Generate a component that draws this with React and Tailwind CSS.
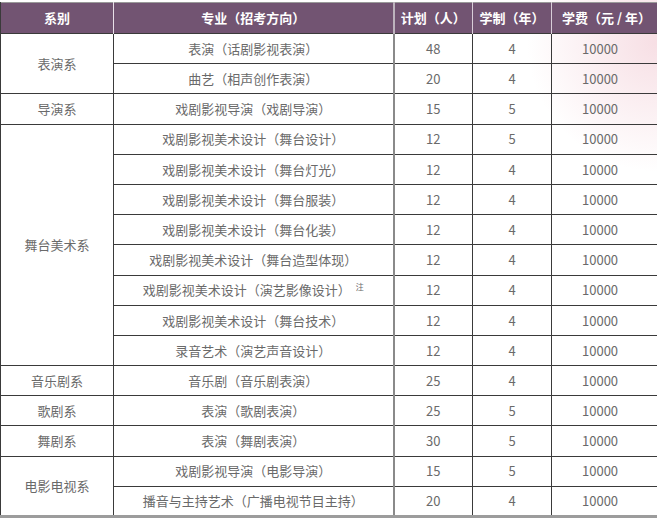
const rows = [
  { dept: "表演系", span: 2, major: "表演（话剧影视表演）", plan: 48, years: 4 },
  { major: "曲艺（相声创作表演）", plan: 20, years: 4 },
  { dept: "导演系", span: 1, major: "戏剧影视导演（戏剧导演）", plan: 15, years: 5 },
  { dept: "舞台美术系", span: 8, major: "戏剧影视美术设计（舞台设计）", plan: 12, years: 5 },
  { major: "戏剧影视美术设计（舞台灯光）", plan: 12, years: 4 },
  { major: "戏剧影视美术设计（舞台服装）", plan: 12, years: 4 },
  { major: "戏剧影视美术设计（舞台化装）", plan: 12, years: 4 },
  { major: "戏剧影视美术设计（舞台造型体现）", plan: 12, years: 4 },
  { major: "戏剧影视美术设计（演艺影像设计）", note: true, plan: 12, years: 4 },
  { major: "戏剧影视美术设计（舞台技术）", plan: 12, years: 4 },
  { major: "录音艺术（演艺声音设计）", plan: 12, years: 4 },
  { dept: "音乐剧系", span: 1, major: "音乐剧（音乐剧表演）", plan: 25, years: 4 },
  { dept: "歌剧系", span: 1, major: "表演（歌剧表演）", plan: 25, years: 5 },
  { dept: "舞剧系", span: 1, major: "表演（舞剧表演）", plan: 30, years: 5 },
  { dept: "电影电视系", span: 2, major: "戏剧影视导演（电影导演）", plan: 15, years: 5 },
  { major: "播音与主持艺术（广播电视节目主持）", plan: 20, years: 4 },
];

const cell = "border border-[#3a3a3a] text-center align-middle p-0";

export default function App() {
  return (
    <div
      className="w-[657px] h-[520px] overflow-hidden bg-white pt-[2px] bg-[radial-gradient(circle_at_100%_8%,rgba(240,196,206,0.55),rgba(255,255,255,0)_130px)]"
      style={{ fontFamily: '"Noto Sans CJK SC", "Noto Sans", sans-serif' }}
    >
      <table className="table-fixed border-collapse w-[660px] text-[13px] text-[#6a6a6a] border-t border-t-[#9a9a9a] border-b-[3px] border-b-[#9c9c9c]">
        <colgroup>
          <col className="w-[113px]" />
          <col className="w-[280px]" />
          <col className="w-[79px]" />
          <col className="w-[79px]" />
          <col className="w-[109px]" />
        </colgroup>
        <thead>
          <tr className="h-[31px] bg-[#725472] text-white font-bold text-[13px]">
            <th className="border-r border-r-[#e8e0e8] border-l border-l-[#3a3a3a] p-0">系别</th>
            <th className="border-r-2 border-r-[#bdb3bd] p-0">专业（招考方向）</th>
            <th className="border-r border-r-[#d8cdd8] p-0">计划（人）</th>
            <th className="border-r border-r-[#d8cdd8] p-0">学制（年）</th>
            <th className="p-0 text-left pl-[10px]">学费（元 / 年）</th>
          </tr>
        </thead>
        <tbody>
          {rows.map((r, i) => (
            <tr key={i} className="h-[30.2px]">
              {r.dept && (
                <td rowSpan={r.span} className={cell}>
                  {r.dept}
                </td>
              )}
              <td className={`${cell} border-r-2 border-r-[#8a8a8a]`}>
                {r.major}
                {r.note && (
                  <span className="text-[8px] ml-[5px] align-[5px] leading-none">注</span>
                )}
              </td>
              <td className={cell}>{r.plan}</td>
              <td className={cell}>{r.years}</td>
              <td className={`${cell} text-left pl-[30px]`}>10000</td>
            </tr>
          ))}
        </tbody>
      </table>
    </div>
  );
}
